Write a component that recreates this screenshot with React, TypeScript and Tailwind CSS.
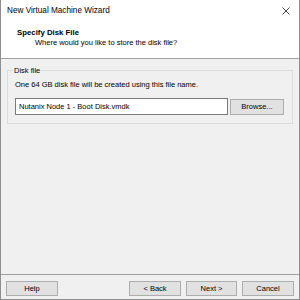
import React from 'react';

const btn =
  'h-[15px] bg-[#e1e1e1] border border-[#adadad] text-[7.5px] text-black flex items-center justify-center';

export default function App() {
  return (
    <div className="w-[300px] h-[300px] bg-[#f0f0f0] border-x border-b border-[#8f8f8f] flex flex-col font-['Liberation_Sans',Arial,sans-serif] text-black overflow-hidden">
      {/* title bar */}
      <div className="h-[22px] bg-white flex items-center justify-between pl-[6px] pr-[9px]">
        <span className="text-[8.2px]">New Virtual Machine Wizard</span>
        <svg width="8" height="8" viewBox="0 0 8 8" className="text-[#333]">
          <path d="M0.5 0.5 L7.5 7.5 M7.5 0.5 L0.5 7.5" stroke="currentColor" strokeWidth="0.9" />
        </svg>
      </div>

      {/* header */}
      <div className="h-[37px] bg-white border-b border-[#a0a0a0] pl-[16px] pt-[6px] flex flex-col">
        <span className="text-[7.8px] font-bold leading-[9px]">Specify Disk File</span>
        <span className="text-[7.5px] leading-[9px] pl-[18px] mt-[1px]">Where would you like to store the disk file?</span>
      </div>

      {/* body */}
      <div className="flex-1 px-[6px] pt-[11px]">
        <div className="relative h-[54px] border border-[#dcdcdc] px-[7px] pt-[9px]">
          <span className="absolute -top-[5px] left-[5px] px-[1px] bg-[#f0f0f0] text-[7.5px] leading-[9px]">Disk file</span>
          <div className="text-[7.5px] leading-[9px]">One 64 GB disk file will be created using this file name.</div>
          <div className="flex items-center gap-[2px] mt-[9px]">
            <div className="w-[213px] h-[17px] bg-white border border-[#7a7a7a] flex items-center pl-[3px] text-[7.5px]">
              Nutanix Node 1 - Boot Disk.vmdk
            </div>
            <div className={`${btn} w-[54px] h-[16px]`}>Browse...</div>
          </div>
        </div>
      </div>

      {/* footer */}
      <div className="border-t border-[#a0a0a0] h-[25px] flex items-start pt-[6px] px-[5px]">
        <div className={`${btn} w-[52px]`}>Help</div>
        <div className="flex-1" />
        <div className={`${btn} w-[52px]`}>&lt; Back</div>
        <div className={`${btn} w-[51px] ml-[5px] border-[#0078d7]`}>Next &gt;</div>
        <div className={`${btn} w-[52px] ml-[5px]`}>Cancel</div>
      </div>
    </div>
  );
}
